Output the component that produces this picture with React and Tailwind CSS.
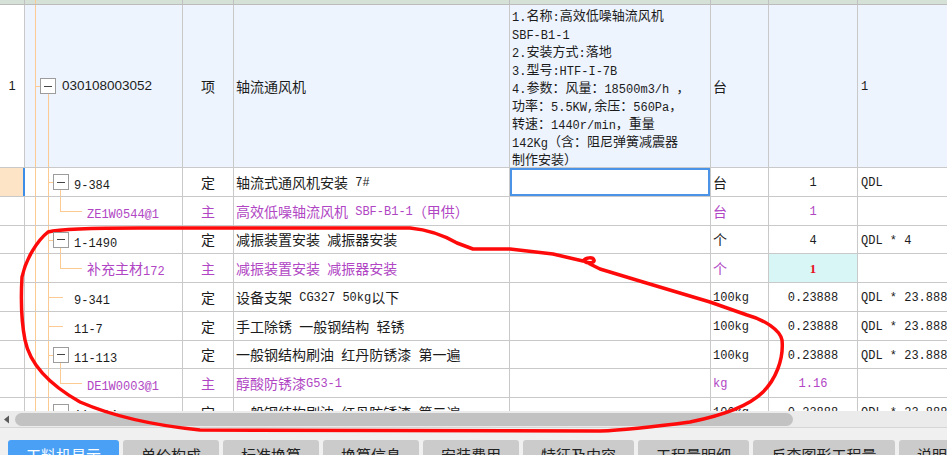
import React from "react";

const CJK = /([\u2e80-\u9fff\uf900-\ufaff\ufe30-\ufe4f\uff00-\uffef\u3000-\u303f]+)/;

function Mix({ t, big = "text-[14px]", small = "text-[12px]" }) {
  return t.split(CJK).map((p, i) =>
    p === "" ? null : i % 2 ? (
      <span key={i} className={`${big} [font-family:'Noto_Sans_CJK_SC',sans-serif]`}>
        {p}
      </span>
    ) : (
      <span key={i} className={`${small} relative top-[1px] whitespace-pre [font-family:'Liberation_Mono',monospace]`}>
        {p}
      </span>
    )
  );
}

const line = "absolute bg-[#fcca93]";

function Box() {
  return (
    <span className="relative z-10 flex h-[16px] w-[16px] shrink-0 items-center justify-center border border-[#9c9c9c] bg-white">
      <span className="h-px w-[8px] bg-[#444]" />
    </span>
  );
}

function Tree({ r }) {
  return (
    <div className="relative flex h-full w-[158px] shrink-0 items-center border-r border-[#c9c9c9]">
      <span className={`${line} left-[10px] top-0 bottom-0 w-px`} />
      <span className={`${line} left-[23px] top-0 bottom-0 w-px`} />
      {r.kind === "box" && (
        <>
          <span className={`${line} left-[23px] top-1/2 h-px w-[5px]`} />
          <span className={`${line} left-[35px] top-[calc(50%+8px)] bottom-0 w-px`} />
          <span className="pl-[28px]">
            <Box />
          </span>
          <span className="ml-[5px]">
            <Mix t={r.code} />
          </span>
        </>
      )}
      {r.kind === "child" && (
        <>
          <span className={`${line} left-[35px] top-0 h-1/2 w-px`} />
          <span className={`${line} left-[35px] top-1/2 h-px w-[22px]`} />
          <span className="pl-[62px]">
            <Mix t={r.code} />
          </span>
        </>
      )}
      {r.kind === "leaf" && (
        <>
          <span className={`${line} left-[23px] top-1/2 h-px w-[15px]`} />
          <span className="pl-[49px]">
            <Mix t={r.code} />
          </span>
        </>
      )}
    </div>
  );
}

const rows = [
  { code: "9-384", kind: "box", t: "定", name: "轴流式通风机安装 7#", unit: "台", qty: "1", expr: "QDL", h: "h-[29px]", sel: true },
  { code: "ZE1W0544@1", kind: "child", t: "主", name: "高效低噪轴流风机 SBF-B1-1（甲供）", unit: "台", qty: "1", expr: "", h: "h-[29px]", purple: true },
  { code: "1-1490", kind: "box", t: "定", name: "减振装置安装 减振器安装", unit: "个", qty: "4", expr: "QDL * 4", h: "h-[28px]" },
  { code: "补充主材172", kind: "child", t: "主", name: "减振装置安装 减振器安装", unit: "个", qty: "1", expr: "", h: "h-[29px]", purple: true, cyan: true },
  { code: "9-341", kind: "leaf", t: "定", name: "设备支架 CG327 50kg以下", unit: "100kg", qty: "0.23888", expr: "QDL * 23.888", h: "h-[29px]" },
  { code: "11-7", kind: "leaf", t: "定", name: "手工除锈 一般钢结构 轻锈", unit: "100kg", qty: "0.23888", expr: "QDL * 23.888", h: "h-[29px]" },
  { code: "11-113", kind: "box", t: "定", name: "一般钢结构刷油 红丹防锈漆 第一遍", unit: "100kg", qty: "0.23888", expr: "QDL * 23.888", h: "h-[28px]" },
  { code: "DE1W0003@1", kind: "child", t: "主", name: "醇酸防锈漆G53-1", unit: "kg", qty: "1.16", expr: "", h: "h-[29px]", purple: true },
  { code: "11-114", kind: "box", t: "定", name: "一般钢结构刷油 红丹防锈漆 第二遍", unit: "100kg", qty: "0.23888", expr: "QDL * 23.888", h: "h-[29px]" },
];

const features = [
  "1.名称:高效低噪轴流风机",
  "SBF-B1-1",
  "2.安装方式:落地",
  "3.型号:HTF-I-7B",
  "4.参数：风量：18500m3/h ，",
  "功率：5.5KW,余压：560Pa，",
  "转速：1440r/min，重量",
  "142Kg（含：阻尼弹簧减震器",
  "制作安装）",
];

const cell = "flex h-full shrink-0 items-center overflow-hidden whitespace-nowrap border-r border-[#c9c9c9]";

function Row({ r }) {
  return (
    <div className={`flex shrink-0 border-b border-[#c9c9c9] bg-white ${r.h} ${r.purple ? "text-[#b046c4]" : "text-[#1c1c1c]"}`}>
      <div className={`h-full w-[25px] shrink-0 ${r.sel ? "border-r-2 border-[#3d8de6] bg-[#fde4c6]" : "border-r border-[#c9c9c9]"}`} />
      <Tree r={r} />
      <div className={`${cell} w-[51px] justify-center`}>
        <Mix t={r.t} />
      </div>
      <div className={`${cell} w-[276px] pl-[2px]`}>
        <Mix t={r.name} />
      </div>
      <div className={`${cell} w-[201px] ${r.sel ? "shadow-[inset_0_0_0_2px_#4b93e6]" : ""}`} />
      <div className={`${cell} w-[58px] pl-[2px]`}>
        <Mix t={r.unit} />
      </div>
      <div className={`${cell} w-[89px] justify-center ${r.cyan ? "bg-[#d8f6f6]" : ""}`}>
        {r.cyan ? (
          <span className="relative top-[1px] text-[13px] font-bold text-[#e8101c] [font-family:'Liberation_Serif',serif]">{r.qty}</span>
        ) : (
          <Mix t={r.qty} />
        )}
      </div>
      <div className="flex h-full flex-1 items-center whitespace-nowrap pl-[3px]">
        <Mix t={r.expr} />
      </div>
    </div>
  );
}

const tabs = [
  ["工料机显示", "w-[111px]"],
  ["单价构成", "w-[96px]"],
  ["标准换算", "w-[96px]"],
  ["换算信息", "w-[96px]"],
  ["安装费用", "w-[96px]"],
  ["特征及内容", "w-[111px]"],
  ["工程量明细", "w-[111px]"],
  ["反查图形工程量", "w-[142px]"],
  ["说明信息", "w-[96px]"],
];

export default function App() {
  return (
    <div className="relative h-[455px] w-[947px] overflow-hidden bg-white text-[#1c1c1c]">
      {/* grid */}
      <div className="flex h-[411px] flex-col overflow-hidden">
        <div className="flex h-[5px] shrink-0 border-b border-[#bcbcbc] bg-[#d5e0d6]">
          <div className="w-[25px] border-r border-[#c0c0c0]" />
          <div className="relative w-[158px] border-r border-[#c0c0c0]">
            <span className={`${line} left-[10px] top-0 bottom-0 w-px`} />
          </div>
          <div className="w-[51px] border-r border-[#c0c0c0]" />
          <div className="w-[276px] border-r border-[#c0c0c0]" />
          <div className="w-[201px] border-r border-[#c0c0c0]" />
          <div className="w-[58px] border-r border-[#c0c0c0]" />
          <div className="w-[89px] border-r border-[#c0c0c0]" />
          <div className="flex-1" />
        </div>

        {/* parent row */}
        <div className="flex h-[163px] shrink-0 border-b border-[#c9c9c9] bg-[#eef4fe]">
          <div className="flex h-full w-[25px] shrink-0 items-center justify-center border-r border-[#c9c9c9] bg-white text-[13px] [font-family:'Liberation_Sans',sans-serif]">
            1
          </div>
          <div className="relative flex h-full w-[158px] shrink-0 items-center border-r border-[#c9c9c9] pl-[15px]">
            <span className={`${line} left-[10px] top-0 bottom-0 w-px`} />
            <span className={`${line} left-[10px] top-1/2 h-px w-[5px]`} />
            <span className={`${line} left-[23px] top-[calc(50%+8px)] bottom-0 w-px`} />
            <Box />
            <span className="ml-[6px] text-[13.5px] [font-family:'Liberation_Sans',sans-serif]">030108003052</span>
          </div>
          <div className={`${cell} w-[51px] justify-center`}>
            <Mix t="项" />
          </div>
          <div className={`${cell} w-[276px] pl-[2px]`}>
            <Mix t="轴流通风机" />
          </div>
          <div className={`${cell} w-[201px] pl-[2px]`}>
            <div className="flex flex-col">
              {features.map((f) => (
                <div key={f} className="h-[18px] leading-[18px] whitespace-pre">
                  <Mix t={f} big="text-[13px]" small="text-[12px]" />
                </div>
              ))}
            </div>
          </div>
          <div className={`${cell} w-[58px] pl-[2px]`}>
            <Mix t="台" />
          </div>
          <div className={`${cell} w-[89px]`} />
          <div className="flex h-full flex-1 items-center pl-[3px]">
            <Mix t="1" />
          </div>
        </div>

        {rows.map((r) => (
          <Row key={r.code} r={r} />
        ))}
      </div>

      {/* horizontal scrollbar */}
      <div className="flex h-[17px] items-center border-b border-[#d6d6d6] bg-[#ebebeb]">
        <svg width="15" height="17" viewBox="0 0 15 17" className="shrink-0">
          <path d="M4 8.5 L9 4.5 L9 12.5 Z" fill="#5a5a5a" />
        </svg>
        <div className="h-[13px] w-[778px] rounded-full bg-[#c2c2c2]" />
      </div>

      {/* bottom tabs */}
      <div className="flex h-[27px] gap-[4px] bg-[#f0f0f0] pl-[8px] pt-[12px]">
        {tabs.map(([label, w], i) => (
          <div
            key={label}
            className={`${w} h-[24px] shrink-0 rounded-t-[3px] pt-[5px] text-center text-[15px] leading-[20px] [font-family:'Noto_Sans_CJK_SC',sans-serif] ${
              i === 0 ? "bg-[#4aa0f5] text-white" : "bg-[#cbcbcb] text-[#222]"
            }`}
          >
            {label}
          </div>
        ))}
      </div>

      {/* red hand-drawn annotation */}
      <svg className="pointer-events-none absolute inset-0" width="947" height="455" viewBox="0 0 947 455">
        <path
          d="M48 232 C60 229 100 228 140 228 L410 228 C430 230 445 236 457 243 L473 249 L510 249 L553 254 L583 261 c3 -4 10 -4 11 -1 c1 3 -6 4 -10 1 L600 269 L643 282 L710 302 L747 315 C765 320 780 330 782 340 C784 360 775 380 763 392 C750 405 725 415 690 422 C660 426 630 430 600 431 L200 430 C150 425 110 415 80 402 C50 385 30 365 25 340 C21 320 21 295 22 277 C26 258 38 240 48 232 Z"
          fill="none"
          stroke="#ff0a0a"
          strokeWidth="3.5"
          strokeLinejoin="round"
          strokeLinecap="round"
        />
      </svg>
    </div>
  );
}
